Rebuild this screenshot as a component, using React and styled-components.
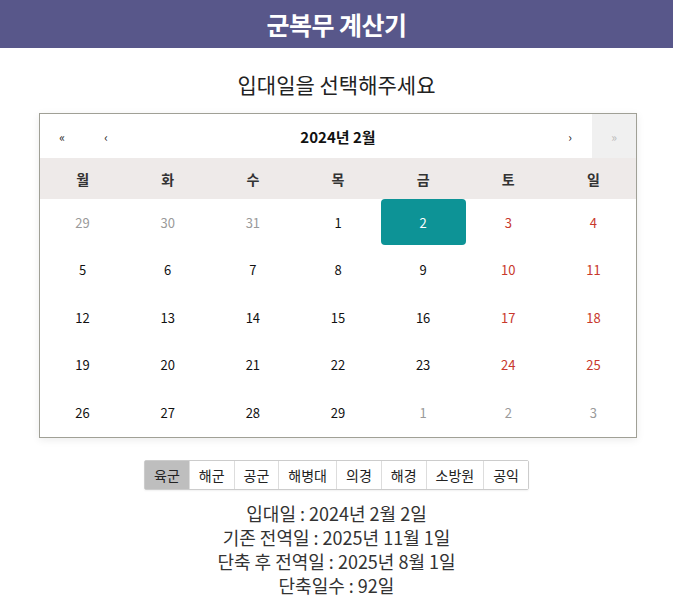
import React, { useState } from "react";
import styled, { createGlobalStyle } from "styled-components";

const GlobalStyle = createGlobalStyle`
  body {
    margin: 0;
    background: #ffffff;
    font-family: "Noto Sans CJK KR", "Noto Sans", sans-serif;
    color: #333;
  }
`;

const Header = styled.header`
  height: 48px;
  background: #58578a;
  display: flex;
  align-items: center;
  justify-content: center;
  color: #fff;
  font-size: 25px;
  font-weight: 600;
  letter-spacing: -0.5px;
`;

const Main = styled.main`
  display: flex;
  flex-direction: column;
  align-items: center;
`;

const Subtitle = styled.h2`
  margin: 22px 0 15px;
  font-size: 21px;
  font-weight: 400;
  color: #222;
  line-height: 28px;
`;

const Calendar = styled.div`
  width: 596px;
  margin-left: 3px;
  border: 1px solid #a0a096;
  box-shadow: 0 2px 8px rgba(0, 0, 0, 0.08);
  background: #fff;
`;

const Nav = styled.div`
  display: flex;
  height: 44px;
`;

const NavButton = styled.button`
  width: 44px;
  border: none;
  background: ${(p) => (p.disabled ? "#f0f0f0" : "#fff")};
  color: ${(p) => (p.disabled ? "#bbb" : "#222")};
  font-size: 12px;
  font-family: inherit;
  padding: 0;
`;

const NavLabel = styled.div`
  flex: 1;
  display: flex;
  align-items: center;
  justify-content: center;
  font-size: 15px;
  font-weight: 700;
  color: #111;
`;

const Weekdays = styled.div`
  display: grid;
  grid-template-columns: repeat(7, 1fr);
  background: #eeeae9;
  height: 41px;
  align-items: center;
`;

const Weekday = styled.div`
  text-align: center;
  font-size: 14px;
  font-weight: 700;
  color: #333;
`;

const Days = styled.div`
  display: grid;
  grid-template-columns: repeat(7, 1fr);
  grid-auto-rows: 47.6px;
`;

const Day = styled.button`
  border: none;
  border-radius: 4px;
  background: ${(p) => (p.$active ? "#0d9396" : "transparent")};
  color: ${(p) =>
    p.$active ? "#fff" : p.$outside ? "#9a9a9a" : p.$weekend ? "#c8382c" : "#111"};
  font-size: 13px;
  font-family: inherit;
  height: 46px;
  padding: 0;
`;

const Branches = styled.div`
  display: flex;
  margin-top: 22px;
  border: 1px solid #ccc;
  border-radius: 2px;
  box-shadow: 0 1px 2px rgba(0, 0, 0, 0.06);
`;

const Branch = styled.button`
  border: none;
  border-left: ${(p) => (p.$first ? "none" : "1px solid #ddd")};
  background: ${(p) => (p.$active ? "#bebebe" : "#fff")};
  color: #222;
  font-family: inherit;
  font-size: 14px;
  height: 28px;
  padding: 0 9px;
`;

const Result = styled.div`
  margin-top: 11px;
  text-align: center;
  font-size: 18px;
  line-height: 24px;
  color: #333;
`;

const weekdays = ["월", "화", "수", "목", "금", "토", "일"];
const branches = ["육군", "해군", "공군", "해병대", "의경", "해경", "소방원", "공익"];

const days = [];
[29, 30, 31].forEach((d) => days.push({ d, outside: true }));
for (let i = 1; i <= 29; i++) days.push({ d: i });
[1, 2, 3].forEach((d) => days.push({ d, outside: true }));

export default function App() {
  const [branch, setBranch] = useState("육군");

  return (
    <>
      <GlobalStyle />
      <Header>군복무 계산기</Header>
      <Main>
        <Subtitle>입대일을 선택해주세요</Subtitle>
        <Calendar>
          <Nav>
            <NavButton>«</NavButton>
            <NavButton>‹</NavButton>
            <NavLabel>2024년 2월</NavLabel>
            <NavButton>›</NavButton>
            <NavButton disabled>»</NavButton>
          </Nav>
          <Weekdays>
            {weekdays.map((w) => (
              <Weekday key={w}>{w}</Weekday>
            ))}
          </Weekdays>
          <Days>
            {days.map((day, i) => (
              <Day
                key={i}
                $outside={day.outside}
                $weekend={i % 7 >= 5}
                $active={!day.outside && day.d === 2}
              >
                {day.d}
              </Day>
            ))}
          </Days>
        </Calendar>
        <Branches>
          {branches.map((b, i) => (
            <Branch
              key={b}
              $first={i === 0}
              $active={b === branch}
              onClick={() => setBranch(b)}
            >
              {b}
            </Branch>
          ))}
        </Branches>
        <Result>
          <div>입대일 : 2024년 2월 2일</div>
          <div>기존 전역일 : 2025년 11월 1일</div>
          <div>단축 후 전역일 : 2025년 8월 1일</div>
          <div>단축일수 : 92일</div>
        </Result>
      </Main>
    </>
  );
}
